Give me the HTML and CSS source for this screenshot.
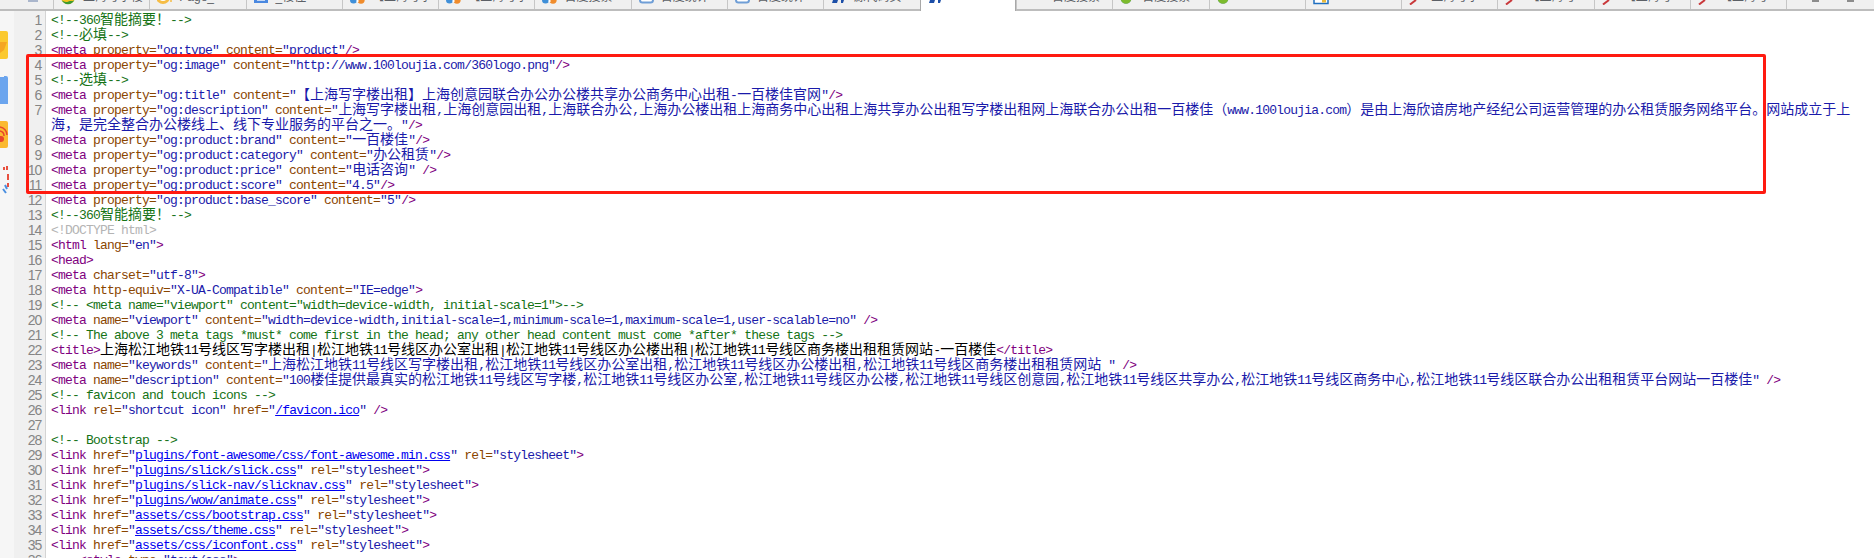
FILE: index.html
```html
<!DOCTYPE html>
<html lang="zh-CN">
<head>
<meta charset="utf-8">
<title>Source view</title>
<link rel="stylesheet" href="styles.css">
</head>
<body>
<svg class="defs" xmlns="http://www.w3.org/2000/svg">
  <symbol id="i-globe" viewBox="0 0 16 5"><circle cx="7" cy="-3" r="7" fill="#f2c21f"/><path d="M0.6 0a7 7 0 0 0 12.8 0c-2 2-3 0-6 1.500S2 1 .6 0z" fill="#3f9a2d"/></symbol>
  <symbol id="i-sun" viewBox="0 0 16 5"><circle cx="6" cy="-3" r="7" fill="#f6bd45"/><circle cx="6" cy="-3" r="4" fill="#fff"/><circle cx="14" cy="1" r="1" fill="#f6bd45"/></symbol>
  <symbol id="i-box" viewBox="0 0 16 5"><rect x="0" y="-5" width="14" height="8" fill="#4a88e0"/><rect x="3" y="-5" width="8" height="6" fill="#c5d9f5"/></symbol>
  <symbol id="i-fly" viewBox="0 0 16 5"><circle cx="3.500" cy="0" r="3.500" fill="#3f8fd8"/><circle cx="11" cy="0" r="3.700" fill="#f08c2c"/><rect x="6.500" y="-3" width="2" height="5" fill="#fff"/></symbol>
  <symbol id="i-round" viewBox="0 0 16 5"><rect x="1" y="-6" width="13" height="8.500" rx="2.500" fill="#fff" stroke="#6f9ed6" stroke-width="2"/></symbol>
  <symbol id="i-dark" viewBox="0 0 16 5"><path d="M2 0h5L6 3H1zM10 0h3l-1 3h-2z" fill="#1c4fa8"/></symbol>
  <symbol id="i-ball" viewBox="0 0 16 5"><circle cx="6" cy="-2" r="5.500" fill="#2f6fc8"/><path d="M0.800 0a5.500 5.500 0 0 0 10.400 0z" fill="#7dbb2e"/></symbol>
  <symbol id="i-win" viewBox="0 0 16 5"><rect x="1" y="-4" width="14" height="7.500" fill="#fff" stroke="#1f6fc0" stroke-width="1.500"/><rect x="9" y="-2" width="4" height="4.500" fill="#e8b93a"/></symbol>
  <symbol id="i-pin" viewBox="0 0 16 5"><path d="M7 0L1 4.500" stroke="#c9373a" stroke-width="2" fill="none"/></symbol>
</svg>

<nav class="tabs">
  <div class="tab-lead"><svg class="tab-lead-icon" viewBox="0 0 10 2"><rect width="10" height="2" fill="#aab6cc"/></svg></div>
  <div class="tab"><svg class="ico"><use href="#i-globe"/></svg><span class="tab-label">上海写字楼</span></div>
  <div class="tab"><svg class="ico"><use href="#i-sun"/></svg><span class="tab-label">Page_</span></div>
  <div class="tab"><svg class="ico"><use href="#i-box"/></svg><span class="tab-label">_楼佳</span></div>
  <div class="tab"><svg class="ico"><use href="#i-fly"/></svg><span class="tab-label">【上海写字</span></div>
  <div class="tab"><svg class="ico"><use href="#i-fly"/></svg><span class="tab-label">【上海写字</span></div>
  <div class="tab"><svg class="ico"><use href="#i-fly"/></svg><span class="tab-label">百度搜索</span></div>
  <div class="tab"><svg class="ico"><use href="#i-round"/></svg><span class="tab-label">百度统计</span></div>
  <div class="tab"><svg class="ico"><use href="#i-round"/></svg><span class="tab-label">百度统计</span></div>
  <div class="tab"><svg class="ico"><use href="#i-dark"/></svg><span class="tab-label">源代码页</span></div>
  <div class="tab active"><svg class="ico"><use href="#i-dark"/></svg></div>
  <div class="tab"><span class="tab-label tab-label-far">百度搜索</span></div>
  <div class="tab"><svg class="ico"><use href="#i-ball"/></svg><span class="tab-label">百度搜索</span></div>
  <div class="tab"><svg class="ico"><use href="#i-ball"/></svg></div>
  <div class="tab"><svg class="ico"><use href="#i-win"/></svg></div>
  <div class="tab"><svg class="ico"><use href="#i-pin"/></svg><span class="tab-label">上海写字</span></div>
  <div class="tab"><svg class="ico"><use href="#i-pin"/></svg><span class="tab-label">【上海写</span></div>
  <div class="tab"><svg class="ico"><use href="#i-pin"/></svg><span class="tab-label">【上海写</span></div>
  <div class="tab"><svg class="ico"><use href="#i-pin"/></svg><span class="tab-label">【上海写</span></div>
  <div class="tab-end"><span class="tab-tool"></span><span class="tab-tool"></span></div>
</nav>

<main class="editor">
  <aside class="dock">
    <svg class="dock-art" viewBox="0 0 14 190">
      <rect x="-6" y="20" width="14" height="28" rx="2" fill="#fbc92f"/>
      <path d="M0 31h7l-3 8-4 3z" fill="#f5a623"/>
      <path d="M-4 66h8v-1h2a2 2 0 0 1 2 2v26h-12z" fill="#6ba5ee"/>
      <rect x="-6" y="110" width="14" height="27" rx="2" fill="#fbb92f"/>
      <path d="M0 116a8 8 0 0 1 7 8M0 120a5 5 0 0 1 4 5" stroke="#e8452c" stroke-width="1.500" fill="none"/>
      <circle cx="1" cy="128" r="3" fill="#e8452c"/>
      <path d="M7 155v4M4 156v3M8 163v6M8 172v4" stroke="#e8503f" stroke-width="2"/>
      <path d="M5 174l2 4M3 178l3 4" stroke="#4a8fe0" stroke-width="2"/>
    </svg>
  </aside>
  <div class="gutter">
    <div class="n">1</div><div class="n">2</div><div class="n">3</div><div class="n">4</div><div class="n">5</div><div class="n">6</div>
    <div class="n n-wrap">7</div>
    <div class="n">8</div><div class="n">9</div><div class="n">10</div><div class="n">11</div><div class="n">12</div><div class="n">13</div><div class="n">14</div><div class="n">15</div><div class="n">16</div><div class="n">17</div><div class="n">18</div><div class="n">19</div><div class="n">20</div><div class="n">21</div><div class="n">22</div><div class="n">23</div><div class="n">24</div><div class="n">25</div><div class="n">26</div><div class="n">27</div><div class="n">28</div><div class="n">29</div><div class="n">30</div><div class="n">31</div><div class="n">32</div><div class="n">33</div><div class="n">34</div><div class="n">35</div><div class="n">36</div>
  </div>
  <pre class="code"><span class="g">&lt;!--360<span class="z">智能摘要！</span>--&gt;</span>
<span class="g">&lt;!--<span class="z">必填</span>--&gt;</span>
<span class="t">&lt;meta</span> <span class="a">property=</span><span class="v">"og:type"</span> <span class="a">content=</span><span class="v">"product"</span><span class="t">/&gt;</span>
<span class="t">&lt;meta</span> <span class="a">property=</span><span class="v">"og:image"</span> <span class="a">content=</span><span class="v">"http://www.100loujia.com/360logo.png"</span><span class="t">/&gt;</span>
<span class="g">&lt;!--<span class="z">选填</span>--&gt;</span>
<span class="t">&lt;meta</span> <span class="a">property=</span><span class="v">"og:title"</span> <span class="a">content=</span><span class="v">"<span class="z">【上海写字楼出租】上海创意园联合办公办公楼共享办公商务中心出租</span>-<span class="z">一百楼佳官网</span>"</span><span class="t">/&gt;</span>
<span class="t">&lt;meta</span> <span class="a">property=</span><span class="v">"og:description"</span> <span class="a">content=</span><span class="v">"<span class="z">上海写字楼出租</span>,<span class="z">上海创意园出租</span>,<span class="z">上海联合办公</span>,<span class="z">上海办公楼出租上海商务中心出租上海共享办公出租写字楼出租网上海联合办公出租一百楼佳（</span>www.100loujia.com<span class="z">）是由上海欣谙房地产经纪公司运营管理的办公租赁服务网络平台。网站成立于上</span>
<span class="z">海，是完全整合办公楼线上、线下专业服务的平台之一。</span>"</span><span class="t">/&gt;</span>
<span class="t">&lt;meta</span> <span class="a">property=</span><span class="v">"og:product:brand"</span> <span class="a">content=</span><span class="v">"<span class="z">一百楼佳</span>"</span><span class="t">/&gt;</span>
<span class="t">&lt;meta</span> <span class="a">property=</span><span class="v">"og:product:category"</span> <span class="a">content=</span><span class="v">"<span class="z">办公租赁</span>"</span><span class="t">/&gt;</span>
<span class="t">&lt;meta</span> <span class="a">property=</span><span class="v">"og:product:price"</span> <span class="a">content=</span><span class="v">"<span class="z">电话咨询</span>"</span> <span class="t">/&gt;</span>
<span class="t">&lt;meta</span> <span class="a">property=</span><span class="v">"og:product:score"</span> <span class="a">content=</span><span class="v">"4.5"</span><span class="t">/&gt;</span>
<span class="t">&lt;meta</span> <span class="a">property=</span><span class="v">"og:product:base_score"</span> <span class="a">content=</span><span class="v">"5"</span><span class="t">/&gt;</span>
<span class="g">&lt;!--360<span class="z">智能摘要！</span>--&gt;</span>
<span class="d">&lt;!DOCTYPE html&gt;</span>
<span class="t">&lt;html</span> <span class="a">lang=</span><span class="v">"en"</span><span class="t">&gt;</span>
<span class="t">&lt;head&gt;</span>
<span class="t">&lt;meta</span> <span class="a">charset=</span><span class="v">"utf-8"</span><span class="t">&gt;</span>
<span class="t">&lt;meta</span> <span class="a">http-equiv=</span><span class="v">"X-UA-Compatible"</span> <span class="a">content=</span><span class="v">"IE=edge"</span><span class="t">&gt;</span>
<span class="g">&lt;!-- &lt;meta name="viewport" content="width=device-width, initial-scale=1"&gt;--&gt;</span>
<span class="t">&lt;meta</span> <span class="a">name=</span><span class="v">"viewport"</span> <span class="a">content=</span><span class="v">"width=device-width,initial-scale=1,minimum-scale=1,maximum-scale=1,user-scalable=no"</span> <span class="t">/&gt;</span>
<span class="g">&lt;!-- The above 3 meta tags *must* come first in the head; any other head content must come *after* these tags --&gt;</span>
<span class="t">&lt;title&gt;</span><span class="k"><span class="z">上海松江地铁</span>11<span class="z">号线区写字楼出租</span>|<span class="z">松江地铁</span>11<span class="z">号线区办公室出租</span>|<span class="z">松江地铁</span>11<span class="z">号线区办公楼出租</span>|<span class="z">松江地铁</span>11<span class="z">号线区商务楼出租租赁网站</span>-<span class="z">一百楼佳</span></span><span class="t">&lt;/title&gt;</span>
<span class="t">&lt;meta</span> <span class="a">name=</span><span class="v">"keywords"</span> <span class="a">content=</span><span class="v">"<span class="z">上海松江地铁</span>11<span class="z">号线区写字楼出租</span>,<span class="z">松江地铁</span>11<span class="z">号线区办公室出租</span>,<span class="z">松江地铁</span>11<span class="z">号线区办公楼出租</span>,<span class="z">松江地铁</span>11<span class="z">号线区商务楼出租租赁网站</span> "</span> <span class="t">/&gt;</span>
<span class="t">&lt;meta</span> <span class="a">name=</span><span class="v">"description"</span> <span class="a">content=</span><span class="v">"100<span class="z">楼佳提供最真实的松江地铁</span>11<span class="z">号线区写字楼</span>,<span class="z">松江地铁</span>11<span class="z">号线区办公室</span>,<span class="z">松江地铁</span>11<span class="z">号线区办公楼</span>,<span class="z">松江地铁</span>11<span class="z">号线区创意园</span>,<span class="z">松江地铁</span>11<span class="z">号线区共享办公</span>,<span class="z">松江地铁</span>11<span class="z">号线区商务中心</span>,<span class="z">松江地铁</span>11<span class="z">号线区联合办公出租租赁平台网站一百楼佳</span>"</span> <span class="t">/&gt;</span>
<span class="g">&lt;!-- favicon and touch icons --&gt;</span>
<span class="t">&lt;link</span> <span class="a">rel=</span><span class="v">"shortcut icon"</span> <span class="a">href=</span><span class="v">"<a class="u">/favicon.ico</a>"</span> <span class="t">/&gt;</span>

<span class="g">&lt;!-- Bootstrap --&gt;</span>
<span class="t">&lt;link</span> <span class="a">href=</span><span class="v">"<a class="u">plugins/font-awesome/css/font-awesome.min.css</a>"</span> <span class="a">rel=</span><span class="v">"stylesheet"</span><span class="t">&gt;</span>
<span class="t">&lt;link</span> <span class="a">href=</span><span class="v">"<a class="u">plugins/slick/slick.css</a>"</span> <span class="a">rel=</span><span class="v">"stylesheet"</span><span class="t">&gt;</span>
<span class="t">&lt;link</span> <span class="a">href=</span><span class="v">"<a class="u">plugins/slick-nav/slicknav.css</a>"</span> <span class="a">rel=</span><span class="v">"stylesheet"</span><span class="t">&gt;</span>
<span class="t">&lt;link</span> <span class="a">href=</span><span class="v">"<a class="u">plugins/wow/animate.css</a>"</span> <span class="a">rel=</span><span class="v">"stylesheet"</span><span class="t">&gt;</span>
<span class="t">&lt;link</span> <span class="a">href=</span><span class="v">"<a class="u">assets/css/bootstrap.css</a>"</span> <span class="a">rel=</span><span class="v">"stylesheet"</span><span class="t">&gt;</span>
<span class="t">&lt;link</span> <span class="a">href=</span><span class="v">"<a class="u">assets/css/theme.css</a>"</span> <span class="a">rel=</span><span class="v">"stylesheet"</span><span class="t">&gt;</span>
<span class="t">&lt;link</span> <span class="a">href=</span><span class="v">"<a class="u">assets/css/iconfont.css</a>"</span> <span class="a">rel=</span><span class="v">"stylesheet"</span><span class="t">&gt;</span>
    <span class="t">&lt;style</span> <span class="a">type=</span><span class="v">"text/css"</span><span class="t">&gt;</span></pre>
  <div class="callout"></div>
</main>
</body>
</html>
```
FILE: styles.css
```css
html, body {
  margin: 0;
  height: 100%;
  overflow: hidden;
  background: #fff;
}

body {
  display: flex;
  flex-direction: column;
  height: 558px;
}

.defs {
  display: none;
}

/* tab strip, cut off by the top of the screenshot */
.tabs {
  display: flex;
  flex: none;
  height: 9px;
  background: #f0f0f0;
  border-bottom: 2px solid #bdbdbd;
  position: relative;
  z-index: 1;
}

.tab-lead {
  flex: none;
  width: 53px;
  padding-left: 28px;
  box-sizing: border-box;
}

.tab-lead-icon {
  display: block;
  width: 10px;
  height: 2px;
}

.tab {
  flex: none;
  width: 96.300px;
  box-sizing: border-box;
  height: 9px;
  display: flex;
  align-items: flex-start;
  padding-left: 7px;
  border-left: 1px solid #c6c6c6;
  overflow: hidden;
}

.tab.active {
  background: #fff;
  height: 11px;
  border-left-color: #a8a8a8;
  border-right: 1px solid #a8a8a8;
}

.ico {
  flex: none;
  width: 16px;
  height: 5px;
}

.tab-label {
  margin: -9px 0 0 6px;
  font: 12px/12px "Liberation Sans", "Noto Sans CJK SC", sans-serif;
  color: #5c6066;
  white-space: nowrap;
}

.tab-label-far {
  margin-left: 28px;
}

.tab-end {
  flex: 1;
  display: flex;
  gap: 28px;
  padding-left: 25px;
  border-left: 1px solid #c6c6c6;
}

.tab-tool {
  width: 7px;
  height: 2px;
  background: #8c8c8c;
}

/* editor */
.editor {
  flex: 1;
  display: flex;
  min-height: 0;
  position: relative;
}

.dock {
  flex: none;
  width: 14px;
  background: #f6f6f6;
  overflow: hidden;
}

.dock-art {
  display: block;
  width: 14px;
  height: 190px;
}

.gutter {
  flex: none;
  width: 31px;
  padding-top: 2px;
  background: #f0f0f0;
  border-right: 1px solid #d4d4d4;
  overflow: hidden;
}

.n {
  height: 15px;
  padding-right: 4px;
  text-align: right;
  font: 14px/15px "Liberation Sans", sans-serif;
  letter-spacing: -1.200px;
  color: #858585;
}

.n-wrap {
  height: 30px;
}

.code {
  flex: 1;
  margin: 0;
  padding: 2px 0 0 5px;
  font: 13px/15px "Liberation Mono", monospace;
  letter-spacing: -0.800px;
  color: #0000b4;
  white-space: pre;
  overflow: hidden;
}

.z {
  font-family: "Noto Sans CJK SC", sans-serif;
  font-size: 14px;
  line-height: 0;
  letter-spacing: 0;
}

.g { color: #157315; }
.t { color: #800080; }
.a { color: #8a4500; }
.v { color: #1a1aaa; }
.k { color: #000; }
.d { color: #b4b4b4; }
.u { color: #0000f0; text-decoration: underline; }

/* annotation drawn over the screenshot */
.callout {
  position: absolute;
  left: 26px;
  top: 43px;
  width: 1740px;
  height: 140px;
  box-sizing: border-box;
  border: 3px solid #ff1a10;
  border-radius: 2px;
}
```
